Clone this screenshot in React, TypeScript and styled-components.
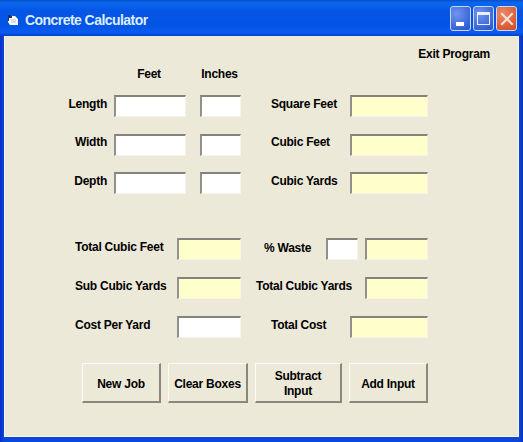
import styled, { createGlobalStyle } from "styled-components";

const GlobalStyle = createGlobalStyle`
  html, body {
    margin: 0;
    padding: 0;
    background: #0a3fc4;
  }
  * {
    box-sizing: border-box;
  }
`;

const App = () => {
  return (
    <Window>
      <GlobalStyle />
      <TitleBar>
        <AppIcon viewBox="0 0 10 11">
          <path d="M0 1h3l1 1h3l3 3v6H2L0 8z" fill="#fff" />
          <path d="M0 1h3l1 1v2H1v3H0z" fill="#1b2f6e" />
          <path d="M3 6h5M3 8h5" stroke="#a9bde8" strokeWidth="1" />
        </AppIcon>
        <Title>Concrete Calculator</Title>
        <Controls>
          <MinButton>
            <MinGlyph />
          </MinButton>
          <MaxButton>
            <MaxGlyph />
          </MaxButton>
          <CloseButton>
            <svg width="14" height="14" viewBox="0 0 14 14">
              <path
                d="M2 2l10 10M12 2L2 12"
                stroke="#f6e4dc"
                strokeWidth="2"
                strokeLinecap="square"
              />
            </svg>
          </CloseButton>
        </Controls>
      </TitleBar>

      <Form>
        <ExitRow>
          <Label>Exit Program</Label>
        </ExitRow>

        <HeaderRow>
          <HeaderCell $width={72}>Feet</HeaderCell>
          <HeaderCell $width={41}>Inches</HeaderCell>
        </HeaderRow>

        <DimensionRows>
          <Row>
            <DimensionLabel>Length</DimensionLabel>
            <Field $width={72} />
            <Field $width={41} $left={14} />
            <ResultLabel>Square Feet</ResultLabel>
            <Field $width={78} $result />
          </Row>
          <Row>
            <DimensionLabel>Width</DimensionLabel>
            <Field $width={72} />
            <Field $width={41} $left={14} />
            <ResultLabel>Cubic Feet</ResultLabel>
            <Field $width={78} $result />
          </Row>
          <Row>
            <DimensionLabel>Depth</DimensionLabel>
            <Field $width={72} />
            <Field $width={41} $left={14} />
            <ResultLabel>Cubic Yards</ResultLabel>
            <Field $width={78} $result />
          </Row>
        </DimensionRows>

        <TotalRows>
          <Row>
            <TotalLabel>Total Cubic Feet</TotalLabel>
            <Field $width={64} $result />
            <WasteLabel>% Waste</WasteLabel>
            <Field $width={32} />
            <Field $width={63} $left={7} $result />
          </Row>
          <Row>
            <TotalLabel>Sub Cubic Yards</TotalLabel>
            <Field $width={64} $result />
            <YardsLabel>Total Cubic Yards</YardsLabel>
            <Field $width={63} $result />
          </Row>
          <Row>
            <TotalLabel>Cost Per Yard</TotalLabel>
            <Field $width={64} />
            <CostLabel>Total Cost</CostLabel>
            <Field $width={78} $result />
          </Row>
        </TotalRows>

        <ButtonRow>
          <Button $width={79}>New Job</Button>
          <Button $width={80}>Clear Boxes</Button>
          <Button $width={87}>
            Subtract
            <br />
            Input
          </Button>
          <Button $width={79}>Add Input</Button>
        </ButtonRow>
      </Form>
    </Window>
  );
};

const Window = styled.div`
  width: 523px;
  height: 442px;
  display: flex;
  flex-direction: column;
  padding: 0 4px 5px;
  overflow: hidden;
  background: linear-gradient(90deg, #0831c8 0, #0a48dc 4px, #0a48dc 519px, #0831b8 100%);
  font-family: "Liberation Sans", Arial, sans-serif;
`;

const TitleBar = styled.div`
  height: 36px;
  margin: 0 -4px;
  padding: 3px 6px 0 8px;
  display: flex;
  align-items: center;
  background: linear-gradient(
    180deg,
    #0a4fc8 0,
    #0a68ee 8%,
    #0556e6 30%,
    #0454e4 70%,
    #0a5cf0 90%,
    #0340c8 100%
  );
`;

const AppIcon = styled.svg`
  width: 10px;
  height: 11px;
  flex: none;
`;

const Title = styled.div`
  margin-left: 7px;
  color: #dcedff;
  font-size: 14px;
  font-weight: 700;
  letter-spacing: -0.55px;
`;

const Controls = styled.div`
  margin-left: auto;
  display: flex;
  gap: 2px;
  margin-top: -2px;
`;

const CaptionButton = styled.div`
  width: 21px;
  height: 25px;
  border: 1px solid #c9d8f4;
  border-radius: 3px;
  display: flex;
  align-items: center;
  justify-content: center;
  position: relative;
`;

const MinButton = styled(CaptionButton)`
  background: radial-gradient(circle at 30% 30%, #6f94ee, #2f5ad4 85%);
`;

const MaxButton = styled(CaptionButton)`
  background: radial-gradient(circle at 30% 30%, #6f94ee, #2f5ad4 85%);
`;

const CloseButton = styled(CaptionButton)`
  background: radial-gradient(circle at 30% 30%, #ec8a68, #d4522a 85%);
`;

const MinGlyph = styled.div`
  position: absolute;
  left: 5px;
  bottom: 4px;
  width: 8px;
  height: 4px;
  background: #fff;
`;

const MaxGlyph = styled.div`
  width: 13px;
  height: 13px;
  border: 1px solid #e8effc;
  border-top-width: 3px;
`;

const Form = styled.div`
  flex: 1;
  display: flex;
  flex-direction: column;
  padding-top: 11px;
  background: #ece9d8;
  box-shadow: inset 1px 0 #f7f5ea, inset -1px 0 #f7f5ea, inset 0 -1px #f7f5ea;
`;

const Label = styled.div`
  color: #000;
  font-size: 12px;
  font-weight: 700;
  letter-spacing: -0.25px;
  line-height: 14px;
  white-space: nowrap;
`;

const ExitRow = styled.div`
  display: flex;
  justify-content: flex-end;
  padding-right: 29px;
`;

const HeaderRow = styled.div`
  display: flex;
  gap: 14px;
  margin-top: 6px;
  padding-left: 109px;
`;

const HeaderCell = styled(Label)<{ $width: number }>`
  width: ${(props) => props.$width}px;
  text-align: center;
`;

const DimensionRows = styled.div`
  display: flex;
  flex-direction: column;
  gap: 16.5px;
  margin-top: 14px;
`;

const TotalRows = styled.div`
  display: flex;
  flex-direction: column;
  gap: 17px;
  margin-top: 44px;
`;

const Row = styled.div`
  height: 22px;
  display: flex;
  align-items: center;
`;

const DimensionLabel = styled(Label)`
  width: 110px;
  padding-right: 7px;
  text-align: right;
  margin-top: -5px;
`;

const ResultLabel = styled(Label)`
  width: 109px;
  padding-left: 30px;
  margin-top: -5px;
`;

const TotalLabel = styled(Label)`
  width: 173px;
  padding-left: 71px;
  margin-top: -4px;
`;

const WasteLabel = styled(Label)`
  width: 85px;
  padding-left: 23px;
  margin-top: -3px;
`;

const YardsLabel = styled(Label)`
  width: 124px;
  padding-left: 15px;
  margin-top: -4px;
`;

const CostLabel = styled(Label)`
  width: 109px;
  padding-left: 30px;
  margin-top: -4px;
`;

const Field = styled.div<{ $width: number; $left?: number; $result?: boolean }>`
  width: ${(props) => props.$width}px;
  height: 22px;
  flex: none;
  margin-left: ${(props) => props.$left ?? 0}px;
  background: ${(props) => (props.$result ? "#ffffcc" : "#ffffff")};
  border-top: 2px solid #84827a;
  border-left: 2px solid #92908a;
  border-right: 1px solid #f6f4ea;
  border-bottom: 1px solid #f6f4ea;
`;

const ButtonRow = styled.div`
  display: flex;
  gap: 7px;
  margin-top: 25px;
  padding-left: 78px;
`;

const Button = styled.div<{ $width: number }>`
  width: ${(props) => props.$width}px;
  height: 40px;
  padding-top: 3px;
  display: flex;
  align-items: center;
  justify-content: center;
  text-align: center;
  color: #000;
  font-size: 12px;
  font-weight: 700;
  letter-spacing: -0.25px;
  line-height: 15px;
  background: #ece9d8;
  border-top: 1px solid #fbfaf4;
  border-left: 1px solid #fbfaf4;
  border-right: 2px solid #8a887c;
  border-bottom: 2px solid #8a887c;
`;

export default App;
